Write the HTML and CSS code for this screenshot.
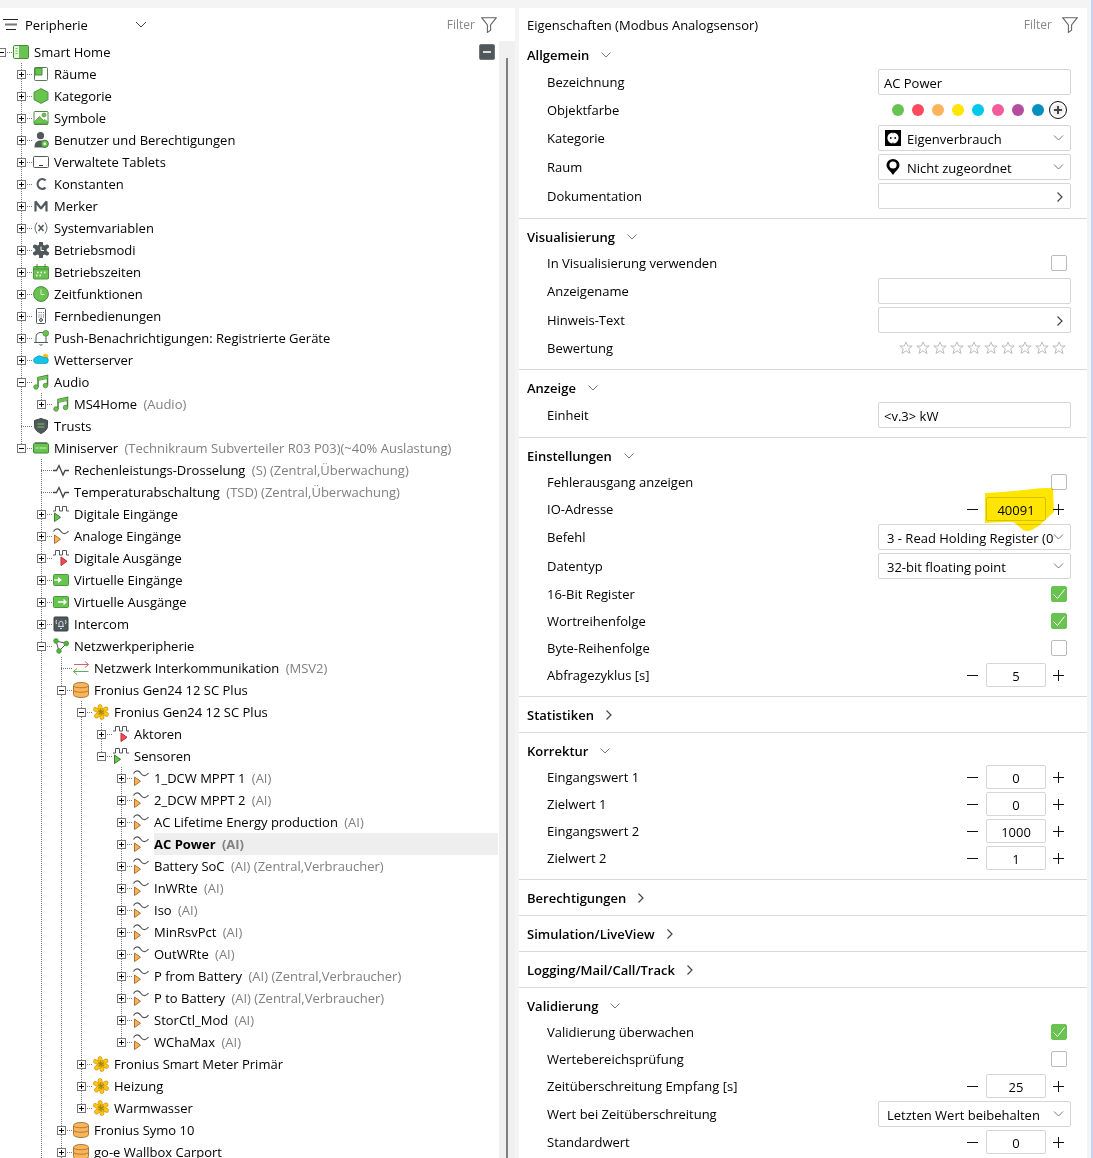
FILE: index.html
```
<!DOCTYPE html>
<html lang="de">
<head>
	<meta charset="utf-8">
	<title>Peripherie</title>
	<link rel="stylesheet" href="styles.css">
</head>
<body>
<!-- Symbole -->
<svg class="defs" aria-hidden="true">
	<symbol id="funnel" viewBox="0 0 16 16"><path d="M.7.7h14.6L9.6 8v5.2l-3.200 2.200V8z" fill="none" stroke="#666" stroke-width="1.1"/></symbol>
	<symbol id="menu" viewBox="0 0 16 16"><path d="M0 2.500h15M3 12.500h10" stroke="#222" stroke-width="1.200"/><path d="M2 7.500h12" stroke="#777" stroke-width="2"/></symbol>
	<symbol id="home" viewBox="0 0 16 16"><rect x=".5" y="1.500" width="15" height="13" rx="1" fill="#69c350" stroke="#4a8a3a"/><path d="M1 2h5v12H1z" fill="#e4f6df"/><path d="M3.500 4v1m0 1.500v1m0 1.500v1" stroke="#69c350" stroke-width="2"/></symbol>
	<symbol id="room" viewBox="0 0 16 16"><rect x="1.500" y="1.500" width="13" height="13" rx="1" fill="#fff" stroke="#5b7a5b"/><path d="M2 2h7v7H2z" fill="#69c350" stroke="#4a8a3a"/></symbol>
	<symbol id="hex" viewBox="0 0 16 16"><path d="M8 .6l7 3.700v7.400l-7 3.700-7-3.700V4.300z" fill="#69c350" stroke="#4a9a3a"/></symbol>
	<symbol id="picture" viewBox="0 0 16 16"><rect x="1" y="1.500" width="14" height="13" rx="1" fill="#fff" stroke="#4f8a45"/><path d="M1.500 11.500l5-5 4 4 1.500-1 2.500 2.500v2h-13z" fill="#69c350" stroke="#4a8a3a" stroke-width=".7"/><circle cx="11" cy="5" r="2" fill="#69c350" stroke="#4a8a3a" stroke-width=".6"/></symbol>
	<symbol id="user" viewBox="0 0 16 16"><circle cx="7.500" cy="3.700" r="3.600" fill="#51585c"/><path d="M1.500 15.500c0-5 2-7 6-7s5.500 2 5.500 7z" fill="#51585c"/><circle cx="11.800" cy="11.800" r="3.600" fill="#69c350" stroke="#3d7d31"/><circle cx="11.800" cy="11.800" r="1.200" fill="#fff"/></symbol>
	<symbol id="tablet" viewBox="0 0 16 16"><rect x=".5" y="2.500" width="15" height="11" rx="1" fill="#fff" stroke="#51585c"/><path d="M6 11.500h4" stroke="#333"/></symbol>
	<symbol id="const" viewBox="0 0 16 16"><path d="M12.500 4.500A4.600 5 0 1 0 12.500 11.500" fill="none" stroke="#51585c" stroke-width="2.200"/></symbol>
	<symbol id="marker" viewBox="0 0 16 16"><path d="M2.500 13.500V3.500L8 10.500l5.500-7v10" fill="none" stroke="#51585c" stroke-width="2.200" stroke-linejoin="bevel"/></symbol>
	<symbol id="var" viewBox="0 0 16 16"><path d="M4 2.500q-4 5.500 0 11M12 2.500q4 5.500 0 11" fill="none" stroke="#666"/><path d="M5.500 5l5 6M10.500 5l-5 6" stroke="#51585c" stroke-width="1.600"/></symbol>
	<symbol id="mode" viewBox="0 0 16 16"><circle cx="8" cy="8" r="5.800" fill="#51585c"/><path d="M8 1v14M2 4.500l12 7M14 4.500l-12 7" stroke="#51585c" stroke-width="4" stroke-linecap="round"/><path d="M8 4.500v4h3" fill="none" stroke="#fff"/></symbol>
	<symbol id="calendar" viewBox="0 0 16 16"><rect x=".5" y="2.500" width="15" height="12.500" rx="1" fill="#69c350" stroke="#4a9a3a"/><path d="M4 0v4M12 0v4M1 5h14" stroke="#4a8a3a"/><path d="M4 8.500h9M3 11.500h7" stroke="#fff" stroke-width="1.500" stroke-dasharray="1.500 2"/></symbol>
	<symbol id="clock" viewBox="0 0 16 16"><circle cx="8" cy="8" r="7.400" fill="#69c350" stroke="#4a8a3a"/><path d="M8 3.500v5h3.500" fill="none" stroke="#d9f2d2"/></symbol>
	<symbol id="remote" viewBox="0 0 16 16"><rect x="3.500" y=".5" width="9" height="15" rx="1" fill="#fff" stroke="#51585c"/><path d="M5.500 4.500h6M5.500 7h6M5.500 9h6" stroke="#51585c" stroke-dasharray="1 1.200"/><circle cx="8" cy="12" r="1.400" fill="none" stroke="#333"/></symbol>
	<symbol id="bell" viewBox="0 0 16 16"><path d="M1 12.500h14M3 12.500V7c0-3 2-4.500 5-4.500s5 1.500 5 4.500v5.500M6.500 14.500q1.500 1.500 3 0" fill="none" stroke="#51585c"/><circle cx="12.800" cy="3.300" r="2.900" fill="#69c350" stroke="#4a8a3a" stroke-width=".7"/></symbol>
	<symbol id="weather" viewBox="0 0 16 16"><circle cx="12.500" cy="4.500" r="2.800" fill="#ffc21a"/><path d="M3.500 11.500A3.200 3.200 0 0 1 3 5.200 4.500 3.500 0 0 1 9 4.500q1.500 1.500 3.500.8A3.100 3.100 0 0 1 12 11.500z" fill="#12c3ea" stroke="#1894b5" stroke-width=".7"/></symbol>
	<symbol id="note" viewBox="0 0 16 16"><path d="M5 13V3.500L14.500 1.500V11" fill="none" stroke="#428335" stroke-width="1.500"/><path d="M5 4.800l9.500-2" stroke="#69c350" stroke-width="2.600"/><path d="M5 6.500l9.500-2" stroke="#428335" stroke-width=".8"/><circle cx="3" cy="13" r="2.300" fill="#69c350" stroke="#428335" stroke-width=".7"/><circle cx="12.500" cy="11.500" r="2.300" fill="#69c350" stroke="#428335" stroke-width=".7"/></symbol>
	<symbol id="shield" viewBox="0 0 16 16"><path d="M8 .5l6.500 2v5c0 4-2.500 6.300-6.500 8-4-1.700-6.500-4-6.500-8v-5z" fill="#51585c" stroke="#3f4548"/><path d="M4.500 6h7M4.500 9h7" stroke="#69a35e" stroke-width="1.300"/></symbol>
	<symbol id="server" viewBox="0 0 16 16"><path d="M2 3.500V2.500h12v1" fill="#aaa" stroke="#8a8a8a"/><rect x=".5" y="3.500" width="15" height="9.500" rx="1" fill="#69c350" stroke="#3d8a30"/><path d="M2.500 8h3M6.500 8h7" stroke="#c9f0bf"/></symbol>
	<symbol id="pulse" viewBox="0 0 16 16"><path d="M0 8.500h3.500l2.500-5 4 9.500 2-4.500h4" fill="none" stroke="#444" stroke-width="1.300"/></symbol>
	<symbol id="din" viewBox="0 0 16 16"><path d="M0 5h2.500V.5h4V5h3V.5h4V5H16" fill="none" stroke="#555"/><path d="M1.500 7l6 4.300-6 4.200z" fill="#69c350" stroke="#3d7d31"/></symbol>
	<symbol id="dout" viewBox="0 0 16 16"><path d="M0 5h2.500V.5h4V5h3V.5h4V5H16" fill="none" stroke="#555"/><path d="M8 7l6 4.300-6 4.200z" fill="#ff4859" stroke="#a33"/></symbol>
	<symbol id="ain" viewBox="0 0 16 16"><path d="M.5 3.500C3-.5 6 .500 8 3.500s5 3 7.500-.5" fill="none" stroke="#555" stroke-width="1.200"/><path d="M1.500 7l6 4.300-6 4.200z" fill="#fbb157" stroke="#a87232"/></symbol>
	<symbol id="vin" viewBox="0 0 16 16"><rect x=".5" y="2.500" width="15" height="11" rx="1" fill="#69c350" stroke="#4a9a3a"/><path d="M1 8h4" stroke="#fff" stroke-width="1.200"/><path d="M5 5l4 3-4 3z" fill="#fff"/></symbol>
	<symbol id="vout" viewBox="0 0 16 16"><rect x=".5" y="2.500" width="15" height="11" rx="1" fill="#69c350" stroke="#4a9a3a"/><path d="M5 8h8M10.500 5.500L13 8l-2.500 2.500" fill="none" stroke="#fff" stroke-width="1.300"/></symbol>
	<symbol id="intercom" viewBox="0 0 16 16"><rect x="1" y="1" width="14" height="14" rx="1" fill="#51585c" stroke="#3b4144"/><path d="M5 10.500h6M6 10V6.500q2-3 4 0V10M7 12.500h2M3.500 4q-1 2 0 4M12.500 4q1 2 0 4" fill="none" stroke="#d5d8da"/></symbol>
	<symbol id="network" viewBox="0 0 16 16"><path d="M3 3l10.500 2.500L6 13z" fill="none" stroke="#555"/><g fill="#55b23e" stroke="#3d8a30" stroke-width=".6"><circle cx="3" cy="3" r="2.400"/><circle cx="13.300" cy="5.500" r="2.400"/><circle cx="6" cy="13" r="2.400"/></g></symbol>
	<symbol id="swap" viewBox="0 0 16 16"><path d="M1 4.500h14.500M12 1.500l3.500 3-3.500 3" fill="none" stroke="#d2636b"/><path d="M15.500 11.500H.5M4 8.500l-3.500 3 3.500 3" fill="none" stroke="#68a85a"/></symbol>
	<symbol id="db" viewBox="0 0 16 16"><path d="M.5 3.500c0-4 15-4 15 0v9c0 4-15 4-15 0z" fill="#f9b55a" stroke="#a8783d"/><path d="M.5 3.500c0 3 15 3 15 0M.5 8c0 3 15 3 15 0" fill="none" stroke="#b67a35"/></symbol>
	<symbol id="flower" viewBox="0 0 16 16"><path d="M8 8L7 2.500M8 8l5-3M8 8l5.500 2.300M8 8l1 5.500M8 8l-4.500 4M8 8L2.500 5.500" stroke="#c9962a" stroke-width="4.600" stroke-linecap="round"/><path d="M8 8L7 2.500M8 8l5-3M8 8l5.500 2.300M8 8l1 5.500M8 8l-4.500 4M8 8L2.500 5.500" stroke="#ffc60b" stroke-width="3.400" stroke-linecap="round"/><circle cx="8" cy="8" r="3.400" fill="#f5a409"/><path d="M8 8L7.300 4.500M8 8l3-1.500M8 8l3 2M8 8v3.500M8 8l-2.500 2.200M8 8L5 6.800" stroke="#7d8a1c" stroke-width=".9"/></symbol>
	<symbol id="socket" viewBox="0 0 16 16"><path d="M0 0h16v16H0z"/><circle cx="8" cy="8" r="5.600" fill="#fff"/><circle cx="5.800" cy="8" r=".9"/><circle cx="10.200" cy="8" r=".9"/><path d="M8 2v1.500M8 12.500V14" stroke="#000"/></symbol>
	<symbol id="pin" viewBox="0 0 16 16"><path d="M8 16C6 12.500 1.500 10 1.500 6a6.500 6 0 0 1 13 0c0 4-4.500 6.500-6.500 10z"/><circle cx="8" cy="6" r="3.600" fill="#fff"/></symbol>
	<symbol id="star" viewBox="0 0 14 14"><path d="M7 1l1.700 4h4.500L9.700 7.800l1.300 4.700L7 9.800l-4 2.700 1.300-4.700L.8 5h4.500z" fill="none" stroke="#bdbdbd"/></symbol>
	<symbol id="down" viewBox="0 0 10 6"><path d="M.5.5L5 5 9.500.5" fill="none" stroke="#777"/></symbol>
	<symbol id="right" viewBox="0 0 6 10"><path d="M.5.5L5 5 .5 9.500" fill="none" stroke="#444" stroke-width="1.200"/></symbol>
</svg>

<div class="app">
	<section class="panel">
		<header class="bar">
			<svg class="ic"><use href="#menu"/></svg>
			<select class="view" aria-label="Ansicht"><option>Peripherie</option></select>
			<button class="filter">Filter <svg class="ic"><use href="#funnel"/></svg></button>
		</header>
		<div class="body">
			<ul class="tree">
				<li>
					<div class="row"><button class="tg open" aria-label="Zuklappen"></button><svg class="ic"><use href="#home"/></svg><span class="name">Smart Home</span><button class="collapse" aria-label="Alles zuklappen"></button></div>
					<ul>
						<li><div class="row"><button class="tg" aria-label="Aufklappen"></button><svg class="ic"><use href="#room"/></svg><span class="name">Räume</span></div></li>
						<li><div class="row"><button class="tg" aria-label="Aufklappen"></button><svg class="ic"><use href="#hex"/></svg><span class="name">Kategorie</span></div></li>
						<li><div class="row"><button class="tg" aria-label="Aufklappen"></button><svg class="ic"><use href="#picture"/></svg><span class="name">Symbole</span></div></li>
						<li><div class="row"><button class="tg" aria-label="Aufklappen"></button><svg class="ic"><use href="#user"/></svg><span class="name">Benutzer und Berechtigungen</span></div></li>
						<li><div class="row"><button class="tg" aria-label="Aufklappen"></button><svg class="ic"><use href="#tablet"/></svg><span class="name">Verwaltete Tablets</span></div></li>
						<li><div class="row"><button class="tg" aria-label="Aufklappen"></button><svg class="ic"><use href="#const"/></svg><span class="name">Konstanten</span></div></li>
						<li><div class="row"><button class="tg" aria-label="Aufklappen"></button><svg class="ic"><use href="#marker"/></svg><span class="name">Merker</span></div></li>
						<li><div class="row"><button class="tg" aria-label="Aufklappen"></button><svg class="ic"><use href="#var"/></svg><span class="name">Systemvariablen</span></div></li>
						<li><div class="row"><button class="tg" aria-label="Aufklappen"></button><svg class="ic"><use href="#mode"/></svg><span class="name">Betriebsmodi</span></div></li>
						<li><div class="row"><button class="tg" aria-label="Aufklappen"></button><svg class="ic"><use href="#calendar"/></svg><span class="name">Betriebszeiten</span></div></li>
						<li><div class="row"><button class="tg" aria-label="Aufklappen"></button><svg class="ic"><use href="#clock"/></svg><span class="name">Zeitfunktionen</span></div></li>
						<li><div class="row"><button class="tg" aria-label="Aufklappen"></button><svg class="ic"><use href="#remote"/></svg><span class="name">Fernbedienungen</span></div></li>
						<li><div class="row"><button class="tg" aria-label="Aufklappen"></button><svg class="ic"><use href="#bell"/></svg><span class="name">Push-Benachrichtigungen: Registrierte Geräte</span></div></li>
						<li><div class="row"><button class="tg" aria-label="Aufklappen"></button><svg class="ic"><use href="#weather"/></svg><span class="name">Wetterserver</span></div></li>
						<li>
							<div class="row"><button class="tg open" aria-label="Zuklappen"></button><svg class="ic"><use href="#note"/></svg><span class="name">Audio</span></div>
							<ul>
								<li><div class="row"><button class="tg" aria-label="Aufklappen"></button><svg class="ic"><use href="#note"/></svg><span class="name">MS4Home <i>(Audio)</i></span></div></li>
							</ul>
						</li>
						<li><div class="row leaf"><svg class="ic"><use href="#shield"/></svg><span class="name">Trusts</span></div></li>
						<li>
							<div class="row"><button class="tg open" aria-label="Zuklappen"></button><svg class="ic"><use href="#server"/></svg><span class="name">Miniserver <i>(Technikraum Subverteiler R03 P03)(~40% Auslastung)</i></span></div>
							<ul>
								<li><div class="row leaf"><svg class="ic"><use href="#pulse"/></svg><span class="name">Rechenleistungs-Drosselung <i>(S) (Zentral,Überwachung)</i></span></div></li>
								<li><div class="row leaf"><svg class="ic"><use href="#pulse"/></svg><span class="name">Temperaturabschaltung <i>(TSD) (Zentral,Überwachung)</i></span></div></li>
								<li><div class="row"><button class="tg" aria-label="Aufklappen"></button><svg class="ic"><use href="#din"/></svg><span class="name">Digitale Eingänge</span></div></li>
								<li><div class="row"><button class="tg" aria-label="Aufklappen"></button><svg class="ic"><use href="#ain"/></svg><span class="name">Analoge Eingänge</span></div></li>
								<li><div class="row"><button class="tg" aria-label="Aufklappen"></button><svg class="ic"><use href="#dout"/></svg><span class="name">Digitale Ausgänge</span></div></li>
								<li><div class="row"><button class="tg" aria-label="Aufklappen"></button><svg class="ic"><use href="#vin"/></svg><span class="name">Virtuelle Eingänge</span></div></li>
								<li><div class="row"><button class="tg" aria-label="Aufklappen"></button><svg class="ic"><use href="#vout"/></svg><span class="name">Virtuelle Ausgänge</span></div></li>
								<li><div class="row"><button class="tg" aria-label="Aufklappen"></button><svg class="ic"><use href="#intercom"/></svg><span class="name">Intercom</span></div></li>
								<li class="more">
									<div class="row"><button class="tg open" aria-label="Zuklappen"></button><svg class="ic"><use href="#network"/></svg><span class="name">Netzwerkperipherie</span></div>
									<ul>
										<li><div class="row leaf"><svg class="ic"><use href="#swap"/></svg><span class="name">Netzwerk Interkommunikation <i>(MSV2)</i></span></div></li>
										<li>
											<div class="row"><button class="tg open" aria-label="Zuklappen"></button><svg class="ic"><use href="#db"/></svg><span class="name">Fronius Gen24 12 SC Plus</span></div>
											<ul>
												<li>
													<div class="row"><button class="tg open" aria-label="Zuklappen"></button><svg class="ic"><use href="#flower"/></svg><span class="name">Fronius Gen24 12 SC Plus</span></div>
													<ul>
														<li><div class="row"><button class="tg" aria-label="Aufklappen"></button><svg class="ic"><use href="#dout"/></svg><span class="name">Aktoren</span></div></li>
														<li>
															<div class="row"><button class="tg open" aria-label="Zuklappen"></button><svg class="ic"><use href="#din"/></svg><span class="name">Sensoren</span></div>
															<ul>
																<li><div class="row"><button class="tg" aria-label="Aufklappen"></button><svg class="ic"><use href="#ain"/></svg><span class="name">1_DCW MPPT 1 <i>(AI)</i></span></div></li>
																<li><div class="row"><button class="tg" aria-label="Aufklappen"></button><svg class="ic"><use href="#ain"/></svg><span class="name">2_DCW MPPT 2 <i>(AI)</i></span></div></li>
																<li><div class="row"><button class="tg" aria-label="Aufklappen"></button><svg class="ic"><use href="#ain"/></svg><span class="name">AC Lifetime Energy production <i>(AI)</i></span></div></li>
																<li><div class="row current"><button class="tg" aria-label="Aufklappen"></button><svg class="ic"><use href="#ain"/></svg><span class="name">AC Power <i>(AI)</i></span></div></li>
																<li><div class="row"><button class="tg" aria-label="Aufklappen"></button><svg class="ic"><use href="#ain"/></svg><span class="name">Battery SoC <i>(AI) (Zentral,Verbraucher)</i></span></div></li>
																<li><div class="row"><button class="tg" aria-label="Aufklappen"></button><svg class="ic"><use href="#ain"/></svg><span class="name">InWRte <i>(AI)</i></span></div></li>
																<li><div class="row"><button class="tg" aria-label="Aufklappen"></button><svg class="ic"><use href="#ain"/></svg><span class="name">Iso <i>(AI)</i></span></div></li>
																<li><div class="row"><button class="tg" aria-label="Aufklappen"></button><svg class="ic"><use href="#ain"/></svg><span class="name">MinRsvPct <i>(AI)</i></span></div></li>
																<li><div class="row"><button class="tg" aria-label="Aufklappen"></button><svg class="ic"><use href="#ain"/></svg><span class="name">OutWRte <i>(AI)</i></span></div></li>
																<li><div class="row"><button class="tg" aria-label="Aufklappen"></button><svg class="ic"><use href="#ain"/></svg><span class="name">P from Battery <i>(AI) (Zentral,Verbraucher)</i></span></div></li>
																<li><div class="row"><button class="tg" aria-label="Aufklappen"></button><svg class="ic"><use href="#ain"/></svg><span class="name">P to Battery <i>(AI) (Zentral,Verbraucher)</i></span></div></li>
																<li><div class="row"><button class="tg" aria-label="Aufklappen"></button><svg class="ic"><use href="#ain"/></svg><span class="name">StorCtl_Mod <i>(AI)</i></span></div></li>
																<li><div class="row"><button class="tg" aria-label="Aufklappen"></button><svg class="ic"><use href="#ain"/></svg><span class="name">WChaMax <i>(AI)</i></span></div></li>
															</ul>
														</li>
													</ul>
												</li>
												<li><div class="row"><button class="tg" aria-label="Aufklappen"></button><svg class="ic"><use href="#flower"/></svg><span class="name">Fronius Smart Meter Primär</span></div></li>
												<li><div class="row"><button class="tg" aria-label="Aufklappen"></button><svg class="ic"><use href="#flower"/></svg><span class="name">Heizung</span></div></li>
												<li><div class="row"><button class="tg" aria-label="Aufklappen"></button><svg class="ic"><use href="#flower"/></svg><span class="name">Warmwasser</span></div></li>
											</ul>
										</li>
										<li><div class="row"><button class="tg" aria-label="Aufklappen"></button><svg class="ic"><use href="#db"/></svg><span class="name">Fronius Symo 10</span></div></li>
										<li class="more"><div class="row"><button class="tg" aria-label="Aufklappen"></button><svg class="ic"><use href="#db"/></svg><span class="name">go-e Wallbox Carport</span></div></li>
									</ul>
								</li>
							</ul>
						</li>
					</ul>
				</li>
			</ul>
			<div class="scroll"><div class="thumb"></div></div>
		</div>
	</section>

	<section class="panel props">
		<header class="bar">
			<h1>Eigenschaften (Modbus Analogsensor)</h1>
			<button class="filter">Filter <svg class="ic"><use href="#funnel"/></svg></button>
		</header>

		<div class="group">
			<h2><button>Allgemein <svg class="down"><use href="#down"/></svg></button></h2>
			<div class="prop"><label for="bez">Bezeichnung</label><input class="field" id="bez" type="text" value="AC Power"></div>
			<div class="prop">
				<span class="label">Objektfarbe</span>
				<div class="colors" role="radiogroup" aria-label="Objektfarbe">
					<input type="radio" name="farbe" class="green" aria-label="Grün">
					<input type="radio" name="farbe" class="red" aria-label="Rot">
					<input type="radio" name="farbe" class="orange" aria-label="Orange">
					<input type="radio" name="farbe" class="yellow" aria-label="Gelb">
					<input type="radio" name="farbe" class="cyan" aria-label="Cyan">
					<input type="radio" name="farbe" class="pink" aria-label="Pink">
					<input type="radio" name="farbe" class="purple" aria-label="Violett">
					<input type="radio" name="farbe" class="blue" aria-label="Blau">
					<button class="add" aria-label="Eigene Farbe"></button>
				</div>
			</div>
			<div class="prop"><label for="kat">Kategorie</label><div class="pick"><svg class="ic"><use href="#socket"/></svg><select class="field" id="kat"><option>Eigenverbrauch</option></select></div></div>
			<div class="prop"><label for="raum">Raum</label><div class="pick"><svg class="ic"><use href="#pin"/></svg><select class="field" id="raum"><option>Nicht zugeordnet</option></select></div></div>
			<div class="prop"><label for="doku">Dokumentation</label><button class="field more-btn" id="doku"><svg class="right"><use href="#right"/></svg></button></div>
		</div>

		<div class="group">
			<h2><button>Visualisierung <svg class="down"><use href="#down"/></svg></button></h2>
			<div class="prop"><label for="vis">In Visualisierung verwenden</label><input type="checkbox" id="vis"></div>
			<div class="prop"><label for="anz">Anzeigename</label><input class="field" id="anz" type="text"></div>
			<div class="prop"><label for="hin">Hinweis-Text</label><button class="field more-btn" id="hin"><svg class="right"><use href="#right"/></svg></button></div>
			<div class="prop">
				<span class="label">Bewertung</span>
				<div class="stars">
					<button aria-label="1 Stern"><svg><use href="#star"/></svg></button>
					<button aria-label="2 Sterne"><svg><use href="#star"/></svg></button>
					<button aria-label="3 Sterne"><svg><use href="#star"/></svg></button>
					<button aria-label="4 Sterne"><svg><use href="#star"/></svg></button>
					<button aria-label="5 Sterne"><svg><use href="#star"/></svg></button>
					<button aria-label="6 Sterne"><svg><use href="#star"/></svg></button>
					<button aria-label="7 Sterne"><svg><use href="#star"/></svg></button>
					<button aria-label="8 Sterne"><svg><use href="#star"/></svg></button>
					<button aria-label="9 Sterne"><svg><use href="#star"/></svg></button>
					<button aria-label="10 Sterne"><svg><use href="#star"/></svg></button>
				</div>
			</div>
		</div>

		<div class="group">
			<h2><button>Anzeige <svg class="down"><use href="#down"/></svg></button></h2>
			<div class="prop"><label for="einheit">Einheit</label><input class="field" id="einheit" type="text" value="&lt;v.3&gt; kW"></div>
		</div>

		<div class="group">
			<h2><button>Einstellungen <svg class="down"><use href="#down"/></svg></button></h2>
			<div class="prop"><label for="fehler">Fehlerausgang anzeigen</label><input type="checkbox" id="fehler"></div>
			<div class="prop">
				<label for="io">IO-Adresse</label>
				<div class="num">
					<button class="minus" aria-label="Weniger"></button>
					<div class="marked">
						<input type="text" id="io" value="40091">
						<svg class="ink" viewBox="0 0 70 44"><path d="M0 5L18 4 48 1Q66-1 68 1L69 24 61 31 55 37 47 42Q42 44 38 42L31 36Q28 33 20 34L0 35z" fill="#ffe500"/></svg>
					</div>
					<button class="plus" aria-label="Mehr"></button>
				</div>
			</div>
			<div class="prop"><label for="befehl">Befehl</label><select class="field" id="befehl"><option>3 - Read Holding Register (0x03)</option></select></div>
			<div class="prop"><label for="typ">Datentyp</label><select class="field" id="typ"><option>32-bit floating point</option></select></div>
			<div class="prop"><label for="bit16">16-Bit Register</label><input type="checkbox" id="bit16" checked></div>
			<div class="prop"><label for="wort">Wortreihenfolge</label><input type="checkbox" id="wort" checked></div>
			<div class="prop"><label for="byte">Byte-Reihenfolge</label><input type="checkbox" id="byte"></div>
			<div class="prop"><label for="zyklus">Abfragezyklus [s]</label><div class="num"><button class="minus" aria-label="Weniger"></button><input type="text" id="zyklus" value="5"><button class="plus" aria-label="Mehr"></button></div></div>
		</div>

		<div class="group closed"><h2><button>Statistiken <svg class="right"><use href="#right"/></svg></button></h2></div>

		<div class="group">
			<h2><button>Korrektur <svg class="down"><use href="#down"/></svg></button></h2>
			<div class="prop"><label for="e1">Eingangswert 1</label><div class="num"><button class="minus" aria-label="Weniger"></button><input type="text" id="e1" value="0"><button class="plus" aria-label="Mehr"></button></div></div>
			<div class="prop"><label for="z1">Zielwert 1</label><div class="num"><button class="minus" aria-label="Weniger"></button><input type="text" id="z1" value="0"><button class="plus" aria-label="Mehr"></button></div></div>
			<div class="prop"><label for="e2">Eingangswert 2</label><div class="num"><button class="minus" aria-label="Weniger"></button><input type="text" id="e2" value="1000"><button class="plus" aria-label="Mehr"></button></div></div>
			<div class="prop"><label for="z2">Zielwert 2</label><div class="num"><button class="minus" aria-label="Weniger"></button><input type="text" id="z2" value="1"><button class="plus" aria-label="Mehr"></button></div></div>
		</div>

		<div class="group closed"><h2><button>Berechtigungen <svg class="right"><use href="#right"/></svg></button></h2></div>
		<div class="group closed"><h2><button>Simulation/LiveView <svg class="right"><use href="#right"/></svg></button></h2></div>
		<div class="group closed"><h2><button>Logging/Mail/Call/Track <svg class="right"><use href="#right"/></svg></button></h2></div>

		<div class="group">
			<h2><button>Validierung <svg class="down"><use href="#down"/></svg></button></h2>
			<div class="prop"><label for="val">Validierung überwachen</label><input type="checkbox" id="val" checked></div>
			<div class="prop"><label for="bereich">Wertebereichsprüfung</label><input type="checkbox" id="bereich"></div>
			<div class="prop"><label for="zeit">Zeitüberschreitung Empfang [s]</label><div class="num"><button class="minus" aria-label="Weniger"></button><input type="text" id="zeit" value="25"><button class="plus" aria-label="Mehr"></button></div></div>
			<div class="prop"><label for="wert">Wert bei Zeitüberschreitung</label><select class="field" id="wert"><option>Letzten Wert beibehalten</option></select></div>
			<div class="prop"><label for="std">Standardwert</label><div class="num"><button class="minus" aria-label="Weniger"></button><input type="text" id="std" value="0"><button class="plus" aria-label="Mehr"></button></div></div>
		</div>
	</section>
</div>
</body>
</html>
```
FILE: styles.css
```
* {
	margin: 0;
	padding: 0;
	box-sizing: border-box;
}
body {
	background: #f4f4f4;
	color: #000;
	font: 13px/22px "Open Sans", "Noto Sans", sans-serif;
}
button, input, select {
	font: inherit;
	color: inherit;
	background: none;
	border: none;
	border-radius: 0;
	appearance: none;
	outline: none;
}
button {
	cursor: pointer;
}
ul {
	list-style: none;
}
.defs {
	display: none;
}
.ic {
	flex: none;
	width: 16px;
	height: 16px;
}

.app {
	display: grid;
	grid-template-columns: 515fr 568fr;
	gap: 4px;
	height: 100vh;
	padding: 8px 4px 0 0;
	border-right: 2px solid #c8d4f4;
	overflow: hidden;
}
.panel {
	display: flex;
	flex-direction: column;
	min-width: 0;
	min-height: 0;
	background: #fff;
	overflow: hidden;
}
.bar {
	display: flex;
	flex: none;
	align-items: center;
	height: 33px;
	padding: 0 18px 0 3px;
}
.view {
	width: 122px;
	height: 24px;
	margin-left: 6px;
	background: url("data:image/svg+xml,%3Csvg xmlns='http://www.w3.org/2000/svg' width='12' height='7'%3E%3Cpath d='M1 1l5 5 5-5' fill='none' stroke='%23444'/%3E%3C/svg%3E") no-repeat right center;
}
.filter {
	display: flex;
	align-items: center;
	gap: 6px;
	margin-left: auto;
	color: #888;
	font-size: 12px;
}
.body {
	display: flex;
	flex: 1;
	min-height: 0;
}

/* Baum */
.tree {
	flex: 1;
	min-width: 0;
	margin-left: -3px;
	padding-right: 1px;
	white-space: nowrap;
	overflow: hidden;
}
.tree ul {
	padding-left: 20px;
}
.tree ul li {
	background: repeating-linear-gradient(#777 0 1px, transparent 1px 2px) no-repeat 4px 0 / 1px 100%;
}
.tree ul li:last-child {
	background-size: 1px 11px;
}
.tree ul li.more {
	background-size: 1px 100%;
}
.row {
	display: flex;
	align-items: center;
	height: 22px;
	background: repeating-linear-gradient(90deg, #777 0 1px, transparent 1px 2px) no-repeat 4px 11px / 11px 1px;
}
.leaf {
	padding-left: 16px;
}
.tg {
	flex: none;
	width: 9px;
	height: 9px;
	margin-right: 7px;
	border: 1px solid #777;
	background:
		linear-gradient(#000, #000) no-repeat center / 5px 1px,
		linear-gradient(#000, #000) no-repeat center / 1px 5px,
		#fff;
}
.tg.open {
	background: linear-gradient(#000, #000) no-repeat center / 5px 1px, #fff;
}
.name {
	flex: 1;
	height: 22px;
	margin-left: 5px;
}
.name i {
	margin-left: 3px;
	color: #808080;
	font-style: normal;
}
.current .name {
	background: #eee;
	font-weight: 700;
}
.collapse {
	width: 16px;
	height: 16px;
	margin-right: 3px;
	border: 1px solid #70767a;
	border-radius: 2px;
	background: linear-gradient(#ddd, #ddd) no-repeat center / 8px 2px, #51585c;
}
.scroll {
	width: 16px;
	padding: 17px 7px 0;
	background: #f0f0f0;
}
.thumb {
	height: 100%;
	background: #808080;
}

/* Eigenschaften */
.props .bar {
	padding: 0 9px 0 8px;
}
.props .filter {
	gap: 10px;
}
h1 {
	font-size: 13px;
	font-weight: 400;
}
.group {
	padding: 4px 16px 9px 28px;
	border-bottom: 1px solid #d9d9d9;
}
.bar + .group {
	padding-top: 0;
}
.group:last-child {
	border-bottom: none;
	padding-bottom: 0;
}
.group.closed {
	padding-bottom: 3px;
}
.group h2 {
	height: 28px;
	margin-left: -20px;
	font-size: 13px;
	font-weight: 600;
}
h2 button {
	display: flex;
	align-items: center;
	gap: 12px;
	height: 28px;
}
.down {
	width: 10px;
	height: 6px;
}
.right {
	width: 6px;
	height: 10px;
}
.prop {
	display: flex;
	align-items: center;
	justify-content: space-between;
	min-height: 24px;
}
.prop + .prop {
	margin-top: 3px;
}
.field {
	width: 193px;
	height: 26px;
	padding: 1px 5px 0;
	border: 1px solid #d6d6d6;
	border-radius: 2px;
	background-color: #fff;
}
select.field {
	padding: 1px 16px 0 8px;
	background: #fff url("data:image/svg+xml,%3Csvg xmlns='http://www.w3.org/2000/svg' width='11' height='6'%3E%3Cpath d='M1 .5l4.500 4.500L10 .5' fill='none' stroke='%23777'/%3E%3C/svg%3E") no-repeat right 6px center;
}
.more-btn {
	display: flex;
	align-items: center;
	justify-content: flex-end;
	padding-right: 7px;
}
.pick {
	display: grid;
	align-items: center;
}
.pick > * {
	grid-area: 1 / 1;
}
.pick .ic {
	z-index: 1;
	margin-left: 7px;
}
.pick select.field {
	padding-left: 28px;
}
.colors {
	display: flex;
	align-items: center;
	gap: 8px;
	padding-right: 4px;
}
.colors input {
	width: 12px;
	height: 12px;
	border-radius: 50%;
}
.green { background: #69c350; }
.red { background: #ff4b5f; }
.orange { background: #fbb45c; }
.yellow { background: #ffe500; }
.cyan { background: #00c8e8; }
.pink { background: #f45b9b; }
.purple { background: #b44c9f; }
.blue { background: #008fbe; }
.add {
	width: 18px;
	height: 18px;
	margin-left: -3px;
	border: 1px solid #111;
	border-radius: 50%;
	background:
		linear-gradient(#444, #444) no-repeat center / 8px 2px,
		linear-gradient(#444, #444) no-repeat center / 2px 8px,
		#eee;
	box-shadow: inset 0 0 0 2px #fff;
}
input[type="checkbox"] {
	width: 16px;
	height: 16px;
	margin-right: 4px;
	border: 1px solid #bbb;
	border-radius: 2px;
	background-color: #fff;
}
input[type="checkbox"]:checked {
	border-color: #69c350;
	background: #69c350 url("data:image/svg+xml,%3Csvg xmlns='http://www.w3.org/2000/svg' width='14' height='14'%3E%3Cpath d='M1.500 7.500l4 4 7-9' fill='none' stroke='%23fff'/%3E%3C/svg%3E") no-repeat center;
}
.stars {
	display: flex;
	padding-right: 4px;
}
.stars button {
	width: 17px;
	height: 24px;
}
.stars svg {
	display: block;
	width: 14px;
	height: 14px;
	margin: 0 auto;
}
.num {
	display: flex;
}
.num input {
	width: 60px;
	height: 24px;
	padding-top: 1px;
	border: 1px solid #d6d6d6;
	border-radius: 2px;
	text-align: center;
}
.num button {
	width: 25px;
	height: 24px;
}
.num .minus {
	width: 27px;
	background: linear-gradient(#111, #111) no-repeat center / 11px 1px;
}
.plus {
	background:
		linear-gradient(#111, #111) no-repeat center / 11px 1px,
		linear-gradient(#111, #111) no-repeat center / 1px 11px;
}

/* gelber Marker ueber der Adresse */
.marked {
	position: relative;
}
.marked input {
	display: block;
}
.ink {
	position: absolute;
	top: -9px;
	left: -1px;
	width: 70px;
	height: 44px;
	mix-blend-mode: multiply;
	pointer-events: none;
}
```
